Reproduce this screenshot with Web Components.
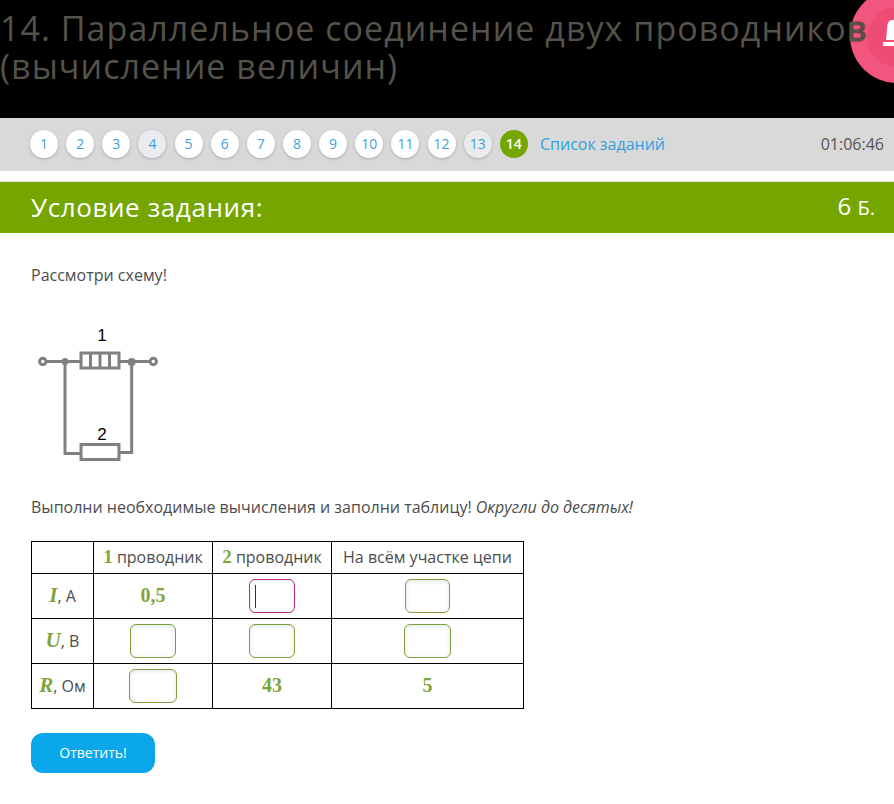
<!DOCTYPE html>
<html lang="ru"><head><meta charset="utf-8"><title>Задание</title>
<style>
html,body{margin:0;padding:0;background:#fff;font-family:"Open Sans","Noto Sans",sans-serif;color:#4d4d4d;overflow:hidden}
body{width:894px;height:804px}
</style></head><body>
<quiz-header>14. Параллельное соединение двух проводников (вычисление величин)</quiz-header>
<quiz-nav current="14" visited="4,13" count="14" timer="01:06:46" link="Список заданий"></quiz-nav>
<task-banner points="6">Условие задания:</task-banner>
<task-body>
  <task-text>Рассмотри схему!</task-text>
  <circuit-diagram></circuit-diagram>
  <task-text>Выполни необходимые вычисления и заполни таблицу! <i>Округли до десятых!</i></task-text>
  <answer-table></answer-table>
  <primary-button>Ответить!</primary-button>
</task-body>
<script>
function def(name, css, html, init){
  customElements.define(name, class extends HTMLElement{
    connectedCallback(){
      if(this.shadowRoot) return;
      const r=this.attachShadow({mode:'open'});
      r.innerHTML='<style>'+css+'</style>'+(typeof html==='function'?html(this):html);
      if(init) init(this,r);
    }
  });
}
def('quiz-header',`
:host{display:block;position:relative;background:#000;height:118px;overflow:hidden;box-sizing:border-box;padding-top:9px}
.bell{position:absolute;left:850px;top:-11px;width:94px;height:94px;border-radius:50%;background:#f2567f;z-index:0}
.inner{position:absolute;left:17px;top:18px;width:60px;height:60px;border-radius:50%;background:#ee4b75}
svg{position:absolute;left:16px;top:13px}
h1{position:relative;z-index:1;margin:0;font:400 34px/38px "Open Sans",sans-serif;color:#54534a;letter-spacing:1.045px;width:890px}
.v{text-shadow:0 0 1px #33322e,0 0 2px #33322e}
`,el=>{
  const t=el.textContent;
  const k=t.indexOf('проводников');
  const head=t.slice(0,k+10), last=t.charAt(k+10), tail=t.slice(k+11);
  return `<div class="bell"><div class="inner"><svg width="34" height="30" viewBox="0 0 34 30"><path fill="#fff" d="M9 0C6 0 4.500 3 4.300 6L3 20H34V0z"/><rect x="0" y="22" width="34" height="4" rx="1" fill="#fff"/></svg></div></div><h1>${head}<span class="v">${last}</span>${tail}</h1>`;
});
def('quiz-pill',`
:host{display:block;width:28px;height:28px;border-radius:50%;background:#fff;box-shadow:0 1px 3px rgba(0,0,0,.22);color:#3f9fd6;font:14px/28px "Open Sans",sans-serif;text-align:center;flex:none}
:host([state=visited]){background:#e9ebee}
:host([state=current]){background:#75a600;color:#fff;box-shadow:none;font-weight:600}
`,'<slot></slot>');
def('quiz-nav',`
:host{display:flex;align-items:center;background:#d9d9d9;height:53px;padding:0 10px 1px 30px;box-sizing:border-box;gap:8.15px;font-family:"Open Sans",sans-serif}
a{margin-left:4px;color:#2fa2dc;font-size:16px;text-decoration:none}
.t{margin-left:auto;color:#555;font-size:16px}
`,el=>{
  const n=+el.getAttribute('count'),cur=el.getAttribute('current'),vis=el.getAttribute('visited').split(',');
  let s='';
  for(let i=1;i<=n;i++){const st=(i==cur)?'current':vis.includes(String(i))?'visited':'';s+=`<quiz-pill state="${st}">${i}</quiz-pill>`;}
  return s+`<a href="#">${el.getAttribute('link')}</a><span class="t">${el.getAttribute('timer')}</span>`;
});
def('task-banner',`
:host{display:flex;justify-content:space-between;align-items:center;margin-top:10px;border-top:1px solid #e4e4e4;background:#75a600;height:52px;box-sizing:border-box;padding:0 19px 2px 31px;color:#fff;font:26px/32px "Open Sans",sans-serif;letter-spacing:.6px}
.p{font-size:24px;letter-spacing:0}
.b{font-size:20px}
`,el=>`<span><slot></slot></span><span class="p">${el.getAttribute('points')} <span class="b">Б.</span></span>`);
def('task-body',`:host{display:block;padding:30px 31px 0;background:#fff}`,'<slot></slot>');
def('task-text',`:host{display:block;font:16px/24px "Open Sans",sans-serif;color:#4d4d4d}`,'<slot></slot>');
def('circuit-diagram',`
:host{display:block;width:130px;height:145px;margin:33px 0 30px 0}
svg{display:block}
text{font:17px "Liberation Sans",Arial,sans-serif;fill:#000}
`,`<svg width="130" height="145" viewBox="31 320 130 145">
<g fill="none" stroke="#808080" stroke-width="3">
<path d="M46 361.5H80M119 361.5H150M65 361.5V453.5H80M131.700 361.500V452.500H119"/>
<circle cx="42.800" cy="361.500" r="3.200"/><circle cx="153.300" cy="361.500" r="3.200"/>
<rect x="81" y="353" width="38" height="15"/><path d="M90.500 353v15M100 353v15M109.500 353v15"/>
<rect x="81" y="444.500" width="38" height="15"/></g>
<circle cx="65" cy="361.500" r="3.500" fill="#808080"/><circle cx="131.700" cy="362" r="4" fill="#808080"/>
<text x="102" y="341" text-anchor="middle">1</text><text x="102" y="440" text-anchor="middle">2</text></svg>`);
def('answer-input',`
:host{display:inline-block;vertical-align:middle;height:34px;box-sizing:border-box;border:1px solid #7f9f3c;border-radius:6px;background:#fff;box-shadow:inset 0 1px 4px rgba(60,80,110,.16);position:relative}
:host([focused]){border-color:#b0307f;box-shadow:inset 0 1px 3px rgba(60,80,110,.12)}
i{display:none}
:host([focused]) i{display:block;margin:5px 0 0 5px;width:1px;height:23px;background:#333}
`,'<i></i>');
def('answer-table',`
:host{display:block;margin-top:22px;font:16px/20px "Open Sans",sans-serif;color:#4d4d4d}
table{border-collapse:collapse;table-layout:fixed;width:493px}
td{border:1px solid #000;padding:0;text-align:center;font-weight:400}
td.t{padding-bottom:2px}
td.f{height:44px}
td.h{height:31px}
b{font:700 19px "Liberation Serif",serif;color:#7fa63a}
b.i{font-style:italic;font-size:21px}
b.n{font-size:20px}
`,`<table><colgroup><col style="width:62px"><col style="width:119px"><col style="width:119px"><col style="width:192px"></colgroup>
<tr><td class="h"></td><td class="t"><b>1</b> проводник</td><td class="t"><b>2</b> проводник</td><td class="t">На всём участке цепи</td></tr>
<tr><td class="t"><b class="i">I</b>, А</td><td class="t"><b class="n">0,5</b></td><td class="f"><answer-input focused style="width:46px"></answer-input></td><td class="f"><answer-input style="width:45px"></answer-input></td></tr>
<tr><td class="t"><b class="i">U</b>, В</td><td class="f"><answer-input style="width:46px"></answer-input></td><td class="f"><answer-input style="width:46px"></answer-input></td><td class="f"><answer-input style="width:47px"></answer-input></td></tr>
<tr><td class="t"><b class="i">R</b>, Ом</td><td class="f"><answer-input style="width:48px"></answer-input></td><td class="t"><b class="n">43</b></td><td class="t"><b class="n">5</b></td></tr>
</table>`);
def('primary-button',`
:host{display:block;width:124px;height:40px;margin-top:24px;border-radius:12px;background:#0aa8ea;color:#fff;font:14px/40px "Open Sans",sans-serif;text-align:center;cursor:pointer}
`,'<slot></slot>');
</script>
</body></html>
